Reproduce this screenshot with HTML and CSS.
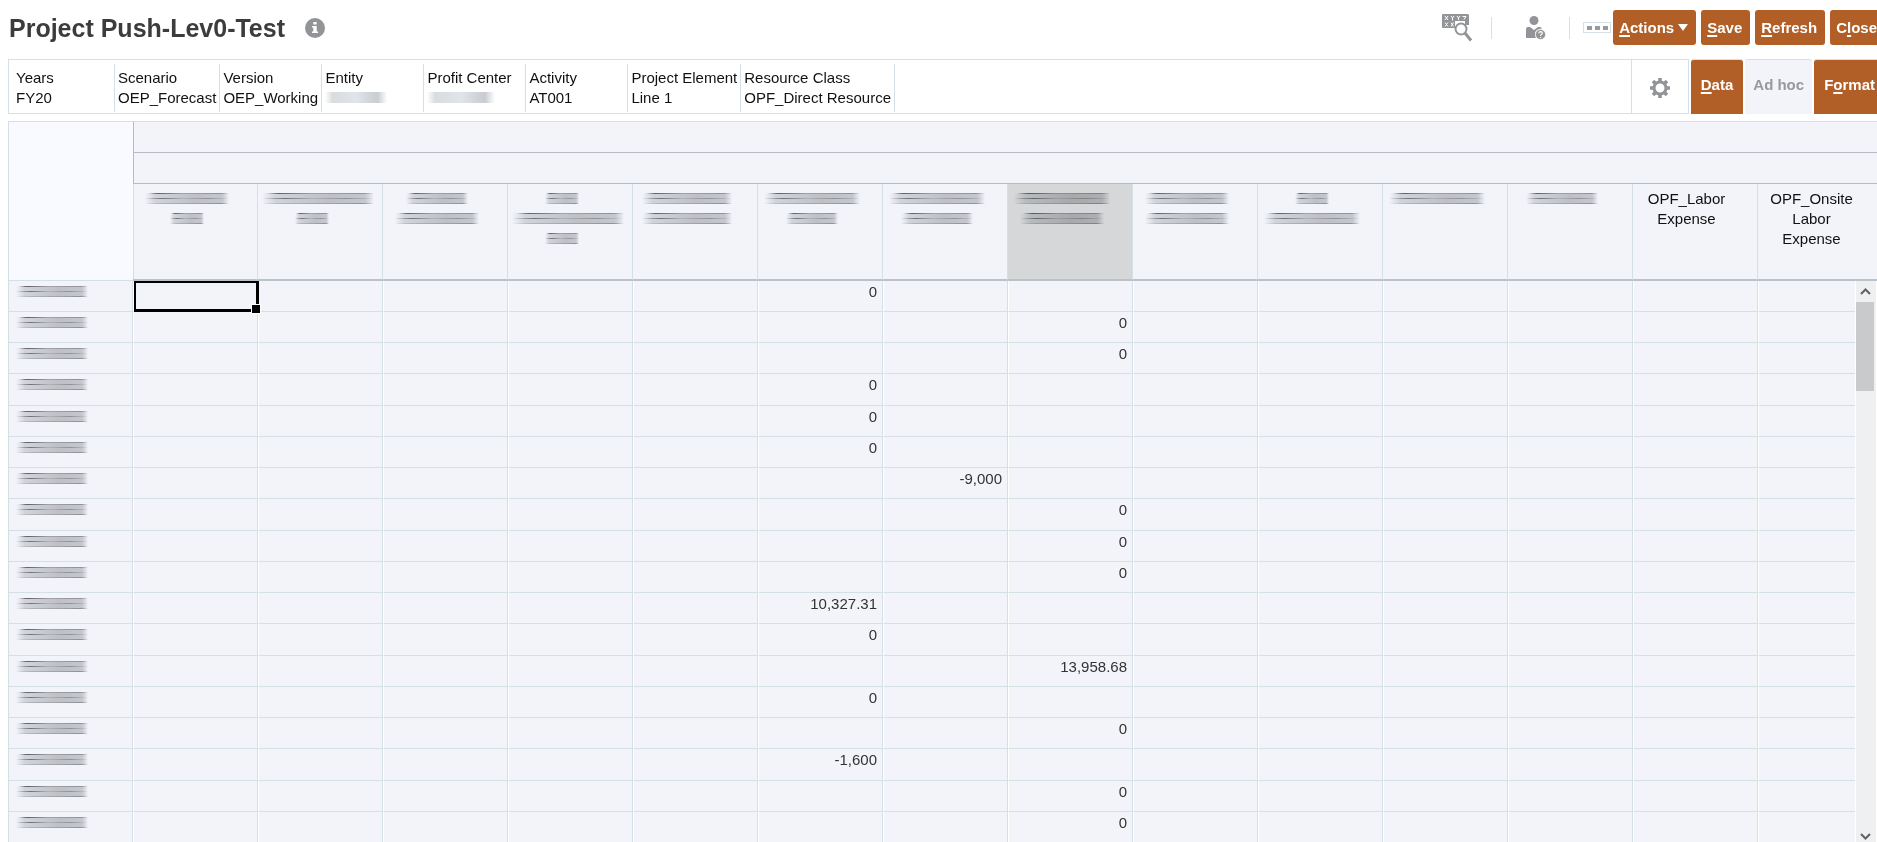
FILE: index.html
```html
<!DOCTYPE html>
<html lang="en">
<head>
<meta charset="utf-8">
<title>Project Push-Lev0-Test</title>
<link rel="stylesheet" href="styles.css">
</head>
<body>
<div class="page">
<header class="topbar">
  <h1 class="title">Project Push-Lev0-Test</h1>
  <svg class="info" viewBox="0 0 20 20" width="20" height="20" role="img" aria-label="Information"><circle cx="10" cy="10" r="10" fill="#929497"/><path d="M8.3 4h3.4v2.6H8.300zM7 8h4.700v5.500h1.300V15H7v-1.500h1.300v-4H7z" fill="#fff"/></svg>
  <div class="tools">
    <svg class="tool-find" viewBox="0 0 30 28" width="30" height="28" aria-hidden="true"><path d="M1 0h24q2 0 2 1v10h-4V7H13v7H1q-1 0-1-1V1q0-1 1-1z" fill="#929497"/><path d="M3 2l3 4M6 2L3 6M9 2l1.500 2L12 2M10.500 4v2.500M15 2l1.500 2L18 2M16.500 4v2M3 8.500l3 4M6 8.500l-3 4M9 8.500l2.500 4M11.500 8.500l-2.500 4M20.500 2.500h3.500l-2 3" stroke="#fff" stroke-width="1" fill="none"/><circle cx="19" cy="15" r="5.500" fill="#fff" stroke="#929497" stroke-width="2"/><path d="M23 19l6 7.500" stroke="#929497" stroke-width="3"/></svg>
    <span class="divider"></span>
    <svg class="tool-user" viewBox="0 0 20 24" width="20" height="24" aria-hidden="true"><circle cx="8" cy="4.500" r="4.500" fill="#929497"/><path d="M0 22V13q0-2 2-2h2l4 3 4-3h2q1.500 0 2 1.500Q9 13 9 18q0 2.500 1 4z" fill="#929497"/><circle cx="14.500" cy="18.500" r="5" fill="#929497" stroke="#fff" stroke-width=".6"/><path d="M12.700 17.300q.2-1.600 1.900-1.600 1.700.1 1.700 1.500-.1.900-1.700 1.800v.8M14.600 20.900v1" stroke="#fff" stroke-width="1.200" fill="none"/></svg>
    <span class="divider"></span>
    <span class="dots"><i></i><i></i><i></i></span>
    <div class="buttons">
      <button class="btn" type="button"><u>A</u>ctions<span class="caret"></span></button>
      <button class="btn" type="button"><u>S</u>ave</button>
      <button class="btn" type="button"><u>R</u>efresh</button>
      <button class="btn" type="button">C<u>l</u>ose</button>
    </div>
  </div>
</header>
<div class="povrow">
  <dl class="pov">
    <div class="dim"><dt>Years</dt><dd>FY20</dd></div>
    <div class="dim"><dt>Scenario</dt><dd>OEP_Forecast</dd></div>
    <div class="dim"><dt>Version</dt><dd>OEP_Working</dd></div>
    <div class="dim"><dt>Entity</dt><dd><i class="smudge pale w62"></i></dd></div>
    <div class="dim"><dt>Profit Center</dt><dd><i class="smudge pale w68"></i></dd></div>
    <div class="dim"><dt>Activity</dt><dd>AT001</dd></div>
    <div class="dim"><dt>Project Element</dt><dd>Line 1</dd></div>
    <div class="dim"><dt>Resource Class</dt><dd>OPF_Direct Resource</dd></div>
  </dl>
  <button class="gear" type="button" aria-label="Settings"><svg viewBox="0 0 20 20" width="20" height="20"><circle cx="10" cy="10" r="6" fill="none" stroke="#929497" stroke-width="3"/><path d="M10 0v4M10 16v4M0 10h4M16 10h4M3 3l2.700 2.700M14.300 14.300L17 17M3 17l2.700-2.700M14.300 5.700L17 3" stroke="#929497" stroke-width="3.600"/></svg></button>
  <div class="tabs">
    <button class="tab" type="button"><u>D</u>ata</button>
    <button class="tab off" type="button" disabled>Ad hoc</button>
    <button class="tab" type="button">F<u>o</u>rmat</button>
  </div>
</div>
<main class="grid">
<table class="sheet">
<colgroup><col class="labels"><col span="14"></colgroup>
<thead>
<tr class="band"><th class="corner" rowspan="3"><th class="span" colspan="14"></tr>
<tr class="band"><th class="span" colspan="14"></tr>
<tr class="cols">
<th><i class="smudge w84"></i><i class="smudge w34"></i>
<th><i class="smudge w112"></i><i class="smudge w34"></i>
<th><i class="smudge w62"></i><i class="smudge w84"></i>
<th><i class="smudge w34"></i><i class="smudge w112"></i><i class="smudge w34"></i>
<th><i class="smudge w90"></i><i class="smudge w90"></i>
<th><i class="smudge w96"></i><i class="smudge w52"></i>
<th><i class="smudge w96"></i><i class="smudge w72"></i>
<th class="hot"><i class="smudge w96"></i><i class="smudge w84"></i>
<th><i class="smudge w84"></i><i class="smudge w84"></i>
<th><i class="smudge w34"></i><i class="smudge w96"></i>
<th><i class="smudge w96"></i>
<th><i class="smudge w72"></i>
<th>OPF_Labor Expense
<th>OPF_Onsite Labor Expense
</tr>
</thead>
<tbody>
<tr><th><i class="smudge"></i><td class="active"><span class="cursor"></span><td><td><td><td><td>0<td><td><td><td><td><td><td><td></tr>
<tr><th><i class="smudge"></i><td><td><td><td><td><td><td><td>0<td><td><td><td><td><td></tr>
<tr><th><i class="smudge"></i><td><td><td><td><td><td><td><td>0<td><td><td><td><td><td></tr>
<tr><th><i class="smudge"></i><td><td><td><td><td><td>0<td><td><td><td><td><td><td><td></tr>
<tr><th><i class="smudge"></i><td><td><td><td><td><td>0<td><td><td><td><td><td><td><td></tr>
<tr><th><i class="smudge"></i><td><td><td><td><td><td>0<td><td><td><td><td><td><td><td></tr>
<tr><th><i class="smudge"></i><td><td><td><td><td><td><td>-9,000<td><td><td><td><td><td><td></tr>
<tr><th><i class="smudge"></i><td><td><td><td><td><td><td><td>0<td><td><td><td><td><td></tr>
<tr><th><i class="smudge"></i><td><td><td><td><td><td><td><td>0<td><td><td><td><td><td></tr>
<tr><th><i class="smudge"></i><td><td><td><td><td><td><td><td>0<td><td><td><td><td><td></tr>
<tr><th><i class="smudge"></i><td><td><td><td><td><td>10,327.31<td><td><td><td><td><td><td><td></tr>
<tr><th><i class="smudge"></i><td><td><td><td><td><td>0<td><td><td><td><td><td><td><td></tr>
<tr><th><i class="smudge"></i><td><td><td><td><td><td><td><td>13,958.68<td><td><td><td><td><td></tr>
<tr><th><i class="smudge"></i><td><td><td><td><td><td>0<td><td><td><td><td><td><td><td></tr>
<tr><th><i class="smudge"></i><td><td><td><td><td><td><td><td>0<td><td><td><td><td><td></tr>
<tr><th><i class="smudge"></i><td><td><td><td><td><td>-1,600<td><td><td><td><td><td><td><td></tr>
<tr><th><i class="smudge"></i><td><td><td><td><td><td><td><td>0<td><td><td><td><td><td></tr>
<tr><th><i class="smudge"></i><td><td><td><td><td><td><td><td>0<td><td><td><td><td><td></tr>
</tbody>
</table>
<div class="scrollbar">
  <svg viewBox="0 0 19 21" width="19" height="21"><path d="M5 13l4.500-4.500L14 13" fill="none" stroke="#606264" stroke-width="2"/></svg>
  <span class="thumb"></span>
  <svg viewBox="0 0 19 21" width="19" height="21"><path d="M5 13l4.500 4.500L14 13" fill="none" stroke="#606264" stroke-width="2"/></svg>
</div>
</main>
</div>
</body>
</html>
```
FILE: styles.css
```css
* { box-sizing: border-box; }
body {
  margin: 0;
  background: #fff;
  color: #111;
  font: 15px/20px "Liberation Sans", Arial, sans-serif;
}
button { font: inherit; border: 0; padding: 0; }
u { text-underline-offset: 2px; text-decoration-thickness: 2px; }
.page { display: flex; flex-direction: column; height: 100vh; overflow: hidden; }

/* Title and toolbar */
.topbar { display: flex; align-items: center; height: 59px; padding: 0 0 4px 9px; flex: none; }
.title { margin: 0; font-size: 25px; line-height: 30px; color: #3c3c3c; white-space: nowrap; }
.info { margin-left: 20px; }
.tools { display: flex; align-items: center; margin-left: auto; margin-right: -8px; flex: none; }
.divider { width: 1px; height: 22px; background: #d8dfe6; }
.tool-find { margin-right: 19px; }
.tool-user { margin: 0 23px 0 34px; }
.dots { display: flex; align-items: center; justify-content: center; gap: 3px; width: 28px; height: 11px; margin: 0 2px 0 13px; border: 1px solid #d5dfe6; }
.dots i { width: 5px; height: 4px; background: #97999c; }
.buttons { display: flex; gap: 5px; }
.btn {
  display: flex;
  align-items: center;
  height: 35px;
  padding: 0 8px 0 6px;
  border-radius: 3px;
  background: #b15f27;
  color: #fff;
  font-weight: bold;
}
.caret { margin-left: 4px; border: 5px solid transparent; border-top: 7px solid #fff; border-bottom: 0; }

/* Point of view */
.povrow { display: flex; height: 55px; padding-left: 8px; margin-right: -8px; flex: none; }
.pov { display: flex; flex: 1; margin: 0; padding: 4px 0 1px; border: 1px solid #d5dfe6; border-right: 0; }
.dim { min-width: 102px; padding: 4px 3px 0; border-right: 1px solid #d5dfe6; white-space: nowrap; }
.dim:first-child { min-width: 106px; padding-left: 7px; }
.dim dd { margin: 0; }
.gear { display: flex; align-items: center; justify-content: center; width: 58px; padding-top: 3px; background: #fff; border: 1px solid #d5dfe6; }
.tabs { display: flex; gap: 2px; margin-left: 2px; }
.tab { padding: 0 10px 5px; border-top: 1px solid #d5dfe6; background: #b15f27; color: #fff; font-weight: bold; border-radius: 3px 3px 0 0; }
.tab.off { padding: 0 8px 5px; background: #f2f4f9; color: #97999c; }

/* Data grid */
.grid { position: relative; flex: 1; min-height: 0; margin: 7px 0 0 8px; overflow: hidden; background: #f2f4f9; border-top: 1px solid #d5dfe6; border-left: 1px solid #d5dfe6; }
.sheet { width: 1874px; table-layout: fixed; border-collapse: separate; border-spacing: 0; }
.sheet .labels { width: 124px; }
.sheet th, .sheet td { font-weight: normal; vertical-align: top; }
.band { height: 31px; }
.sheet .corner { padding: 0; background: #f8faff; border-bottom: 1px solid #d5dfe6; }
.sheet .span { padding: 0; border-left: 1px solid #b8bcc2; border-bottom: 1px solid #b8bcc2; }
.cols { height: 97px; }
.cols th { padding: 5px 21px 0 4px; border-right: 1px solid #d5dfe6; border-bottom: 2px solid #bac2c9; }
.cols th:first-child { box-shadow: inset 1px 0 #d5dfe6; }
.cols .hot { background: #d5d7d8; }
tbody tr { height: 31px; }
tbody tr:nth-child(4n) { height: 32px; }
tbody th, tbody td { padding: 1px 5px 0 0; border: 1px solid #d5dfe6; border-top: 0; border-left-color: #fff; }
tbody th { padding-left: 7px; text-align: left; border-left: 0; }
tbody td { color: #333; text-align: right; }
.active { position: relative; }
.cursor { position: absolute; inset: 0 -2px -1px 0; border: 2px solid #000; border-right-width: 3px; border-bottom-width: 3px; }
.cursor::after { content: ""; position: absolute; right: -5px; bottom: -5px; width: 8px; height: 8px; background: #000; border: 1px solid #fff; }

/* Obscured labels */
.smudge {
  display: block;
  width: 72px;
  height: 11px;
  margin: 4px 0;
  mix-blend-mode: multiply;
  background:
    linear-gradient(90deg, transparent 4%, #666 15%, #aaa 45%, #999 90%, transparent) 0 0 / 100% 1px no-repeat,
    linear-gradient(90deg, transparent, #777 20%, #bbb 45%, #999 75%, transparent) 0 5px / 100% 1px no-repeat,
    linear-gradient(90deg, transparent, #bbb 20%, #aaa 60%, #999 90%, transparent) 0 10px / 100% 1px no-repeat,
    linear-gradient(90deg, transparent, #dcdee0 12%, #c8c9cb 60%, #cfd0d2 92%, transparent);
}
.cols .smudge { margin: 4px auto 9px; }
.cols .smudge + .smudge { margin-top: 0; }
.smudge.pale { background: linear-gradient(90deg, transparent, #d9dcdf 12%, #dfe5ea 50%, #c9ccd0 85%, transparent); }
.smudge.w34 { width: 34px; }
.smudge.w52 { width: 52px; }
.smudge.w62 { width: 62px; }
.smudge.w68 { width: 68px; }
.smudge.w72 { width: 72px; }
.smudge.w84 { width: 84px; }
.smudge.w90 { width: 90px; }
.smudge.w96 { width: 96px; }
.smudge.w112 { width: 112px; }

.scrollbar { position: absolute; top: 159px; right: 0; bottom: 0; width: 22px; padding-right: 2px; display: flex; flex-direction: column; background: #eef0f2; border-left: 1px solid #fff; border-right: 1px solid #fff; }
.thumb { height: 89px; background: #c8cacb; }
.scrollbar svg:last-child { margin-top: auto; }
```
